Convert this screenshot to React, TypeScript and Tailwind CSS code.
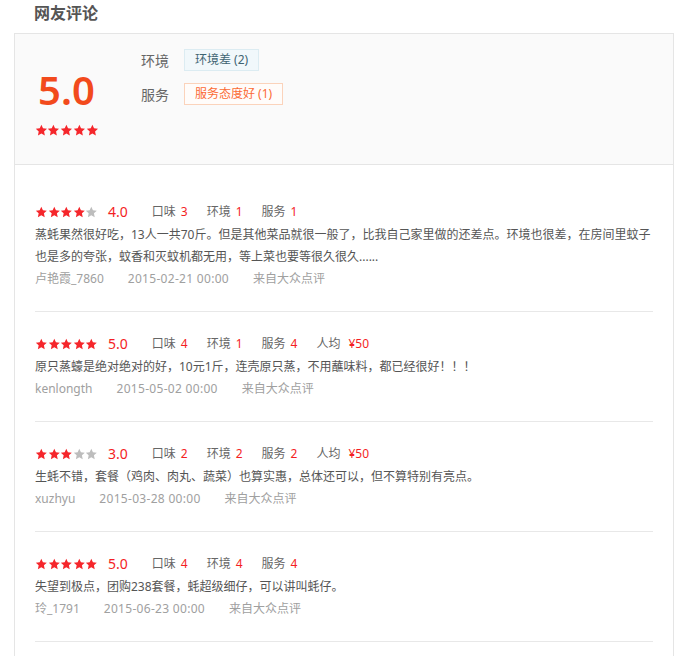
import React from "react";

const FONT = { fontFamily: '"Noto Sans", "Noto Sans CJK SC", sans-serif' };

function Stars({ n, size = 12.6 }: { n: number; size?: number }) {
  const pts = "12,1.5 15.1,8.2 22.5,9 17,14 18.5,21.5 12,17.8 5.5,21.5 7,14 1.5,9 8.9,8.2";
  return (
    <span className="flex shrink-0">
      {[0, 1, 2, 3, 4].map((i) => (
        <svg key={i} width={size} height={size} viewBox="0 0 24 24">
          <polygon points={pts} fill={i < n ? "#f5262b" : "#bdbdbd"} />
        </svg>
      ))}
    </span>
  );
}

type Review = {
  stars: number;
  score: string;
  taste: string;
  env: string;
  svc: string;
  price?: string;
  text: string;
  user: string;
  date: string;
};

const reviews: Review[] = [
  {
    stars: 4,
    score: "4.0",
    taste: "3",
    env: "1",
    svc: "1",
    text:
      "蒸蚝果然很好吃，13人一共70斤。但是其他菜品就很一般了，比我自己家里做的还差点。环境也很差，在房间里蚊子也是多的夸张，蚊香和灭蚊机都无用，等上菜也要等很久很久......",
    user: "卢艳霞_7860",
    date: "2015-02-21 00:00",
  },
  {
    stars: 5,
    score: "5.0",
    taste: "4",
    env: "1",
    svc: "4",
    price: "¥50",
    text: "原只蒸蠔是绝对绝对的好，10元1斤，连壳原只蒸，不用蘸味料，都已经很好！！！",
    user: "kenlongth",
    date: "2015-05-02 00:00",
  },
  {
    stars: 3,
    score: "3.0",
    taste: "2",
    env: "2",
    svc: "2",
    price: "¥50",
    text: "生蚝不错，套餐（鸡肉、肉丸、蔬菜）也算实惠，总体还可以，但不算特别有亮点。",
    user: "xuzhyu",
    date: "2015-03-28 00:00",
  },
  {
    stars: 5,
    score: "5.0",
    taste: "4",
    env: "4",
    svc: "4",
    text: "失望到极点，团购238套餐，蚝超级细仔，可以讲叫蚝仔。",
    user: "玲_1791",
    date: "2015-06-23 00:00",
  },
];

function Item({ label, value }: { label: string; value: string }) {
  return (
    <span className="mr-[19px] flex items-center">
      <span className="text-[#666]">{label}</span>
      <span className="ml-[5px] text-[#f41e24]">{value}</span>
    </span>
  );
}

function ReviewRow({ r, first }: { r: Review; first: boolean }) {
  return (
    <div className={`border-b border-[#e8e8e8] ${first ? "pt-[35px]" : "pt-5"} pb-[21px]`}>
      <div className="flex h-[24px] items-center text-[12px]">
        <Stars n={r.stars} />
        <span className="ml-[10px] mr-6 text-[14px] leading-none text-[#f41e24]">{r.score}</span>
        <Item label="口味" value={r.taste} />
        <Item label="环境" value={r.env} />
        <Item label="服务" value={r.svc} />
        {r.price && (
          <span className="flex items-center">
            <span className="text-[#666]">人均</span>
            <span className="ml-[8px] text-[#f41e24]">{r.price}</span>
          </span>
        )}
      </div>
      <p className="text-[12px] leading-[22px] text-[#555]">{r.text}</p>
      <div className="flex h-[22px] items-center text-[12px] text-[#a0a0a0]">
        <span className="mr-6">{r.user}</span>
        <span className="mr-6 tracking-[0.3px]">{r.date}</span>
        <span>来自大众点评</span>
      </div>
    </div>
  );
}

export default function App() {
  return (
    <div className="min-h-[656px] bg-white" style={FONT}>
      <div className="h-[33px] pl-[34px] pt-[3px]">
        <h2 className="text-[16px] font-bold leading-[20px] text-[#555]">网友评论</h2>
      </div>
      <div className="mx-[14px] border border-[#e5e5e5]">
        <div className="flex h-[131px] items-start border-b border-[#e5e5e5] bg-[#fafafa] pl-[20px] pt-[15px]">
          <div className="mt-[21px] flex w-[63px] flex-col items-center">
            <div className="text-[40px] font-semibold leading-[40px] text-[#f24a1c]">5.0</div>
            <div className="mt-[14px]">
              <Stars n={5} size={12.8} />
            </div>
          </div>
          <div className="ml-[43px] flex flex-col gap-[12px]">
            <div className="flex h-[22px] items-center">
              <span className="w-[43px] text-[14px] text-[#666]">环境</span>
              <span className="flex h-[22px] items-center border border-[#dcecf2] bg-[#f1f8fb] px-[10px] text-[12px] text-[#3f6472]">
                环境差 (2)
              </span>
            </div>
            <div className="flex h-[22px] items-center">
              <span className="w-[43px] text-[14px] text-[#666]">服务</span>
              <span className="flex h-[22px] items-center border border-[#fbd3bb] bg-[#fffcfa] px-[10px] text-[12px] text-[#fb6b35]">
                服务态度好 (1)
              </span>
            </div>
          </div>
        </div>
        <div className="px-[20px] pb-[40px]">
          {reviews.map((r, i) => (
            <ReviewRow key={i} r={r} first={i === 0} />
          ))}
        </div>
      </div>
    </div>
  );
}
